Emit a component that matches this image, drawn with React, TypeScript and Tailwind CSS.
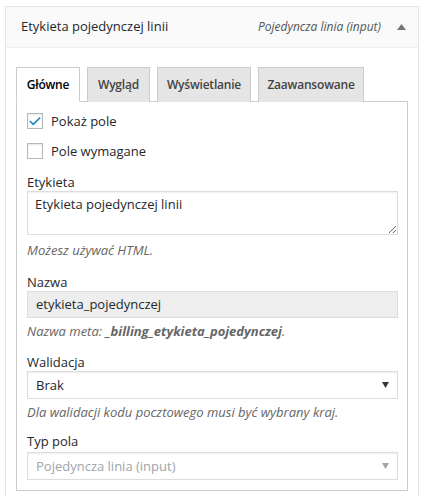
import { Check } from "lucide-react";

const font = { fontFamily: '"Open Sans", "Noto Sans", sans-serif' };

const tabs = [
  { label: "Główne", active: true, w: "w-[64px]" },
  { label: "Wygląd", active: false, w: "w-[63px]" },
  { label: "Wyświetlanie", active: false, w: "w-[94px]" },
  { label: "Zaawansowane", active: false, w: "w-[106px]" },
];

const Checkbox = ({ checked, label }: { checked: boolean; label: string }) => (
  <label className="flex h-4 items-center">
    <span className="flex size-4 items-center justify-center border border-[#b4b9be] bg-white shadow-[inset_0_1px_2px_rgba(0,0,0,0.1)]">
      {checked && <Check size={15} strokeWidth={3} className="text-[#1e8cbe]" />}
    </span>
    <span className="ml-[8px] text-[13px] leading-[17px] text-[#23282d]">{label}</span>
  </label>
);

const Label = ({ children, className = "" }: { children: string; className?: string }) => (
  <div className={`text-[13px] leading-[17px] text-[#23282d] ${className}`}>{children}</div>
);

const Description = ({ children, className = "" }: { children: React.ReactNode; className?: string }) => (
  <p className={`text-[13px] leading-[17px] italic text-[#666] ${className}`}>{children}</p>
);

const Select = ({ value, disabled }: { value: string; disabled?: boolean }) => (
  <div
    className={`flex h-[28px] items-center justify-between border border-[#ddd] bg-white pl-[8px] pr-[8px] shadow-[inset_0_1px_2px_rgba(0,0,0,0.07)] ${
      disabled ? "text-[#a0a5aa]" : "text-[#23282d]"
    }`}
  >
    <span className="text-[13px] leading-[17px]">{value}</span>
    <svg width="7" height="6" viewBox="0 0 7 6" className={disabled ? "fill-[#a0a5aa]" : "fill-[#32373c]"}>
      <path d="M0 0h7L3.5 6z" />
    </svg>
  </div>
);

export default function App() {
  return (
    <div className="bg-white pt-[6px] pl-[5px]" style={font}>
      <div className="w-[414px] border border-[#e5e5e5] bg-white">
        <div className="flex h-[41px] items-center justify-between border-b border-[#eee] bg-[#fafafa] pl-[15px] pr-[12px]">
          <span className="text-[13px] text-[#23282d]">Etykieta pojedynczej linii</span>
          <div className="flex items-center gap-[16px]">
            <span className="text-[12px] italic text-[#555]">Pojedyncza linia (input)</span>
            <svg width="9" height="6" viewBox="0 0 9 6" className="fill-[#72777c]">
              <path d="M0 6h9L4.5 0z" />
            </svg>
          </div>
        </div>

        <div className="pt-[19px] pl-[10px] pr-[10px] pb-[10px]">
          <div className="flex gap-[7px]">
            {tabs.map((t) => (
              <div
                key={t.label}
                className={`${t.w} relative flex h-[35px] items-center justify-center border border-[#ccc] text-[12px] font-semibold tracking-[-0.2px] ${
                  t.active
                    ? "z-10 border-b-white bg-white text-[#000]"
                    : "border-b-0 bg-[#e5e5e5] text-[#444]"
                }`}
              >
                {t.label}
              </div>
            ))}
          </div>

          <div className="-mt-px w-[392px] border border-[#ccc] bg-white pt-[11px] pr-[9px] pb-[10px] pl-[10px]">
            <Checkbox checked label="Pokaż pole" />
            <div className="mt-[14px]">
              <Checkbox checked={false} label="Pole wymagane" />
            </div>

            <Label className="mt-[15px]">Etykieta</Label>
            <textarea
              readOnly
              defaultValue="Etykieta pojedynczej linii"
              className="block h-[44px] w-full border border-[#ddd] bg-white px-[7px] py-[4px] text-[13px] leading-[17px] text-[#23282d] shadow-[inset_0_1px_2px_rgba(0,0,0,0.07)] outline-none"
            />
            <Description className="mt-[7px]">Możesz używać HTML.</Description>

            <Label className="mt-[15px]">Nazwa</Label>
            <div className="flex h-[27px] items-center border border-[#ddd] bg-[#eee] px-[8px] text-[13px] text-[#23282d]">
              etykieta_pojedynczej
            </div>
            <Description className="mt-[5px]">
              Nazwa meta: <strong className="font-bold">_billing_etykieta_pojedynczej</strong>.
            </Description>

            <Label className="mt-[14px]">Walidacja</Label>
            <Select value="Brak" />
            <Description className="mt-[5px]">Dla walidacji kodu pocztowego musi być wybrany kraj.</Description>

            <Label className="mt-[12px]">Typ pola</Label>
            <div className="mt-[2px]">
              <Select value="Pojedyncza linia (input)" disabled />
            </div>
          </div>
        </div>
      </div>
    </div>
  );
}
